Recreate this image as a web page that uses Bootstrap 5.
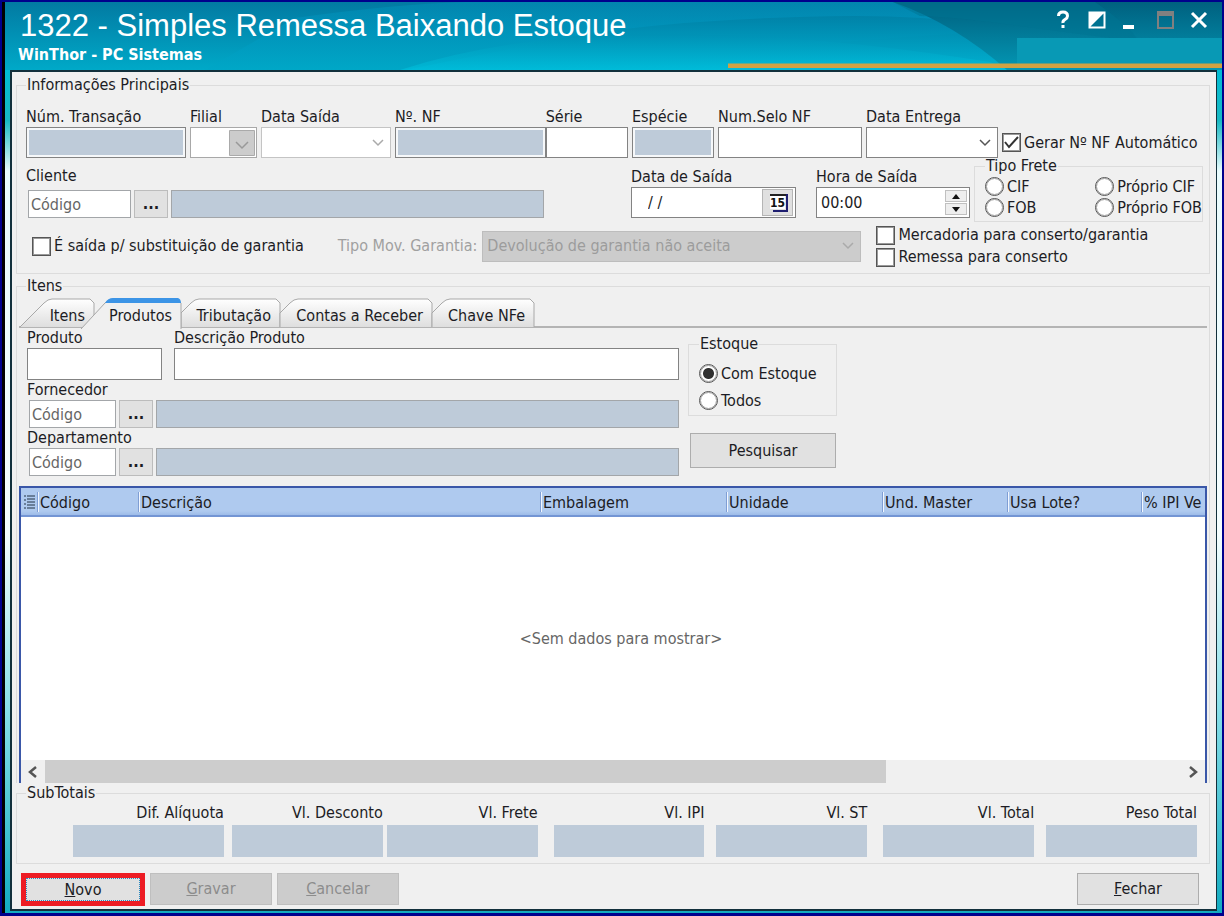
<!DOCTYPE html>
<html lang="pt-BR">
<head>
<meta charset="utf-8">
<meta name="viewport" content="width=device-width, initial-scale=1">
<title>1322 - Simples Remessa Baixando Estoque</title>
<link href="https://cdn.jsdelivr.net/npm/bootstrap@5.3.0/dist/css/bootstrap.min.css" rel="stylesheet">
<style>
:root { --face:#f0f0f0; --blue-gray:#becbd9; --ink:#1c1c24; }
body { font-family:"DejaVu Sans Condensed","Noto Sans",sans-serif; font-size:16px; line-height:20px; color:var(--ink); background:#00008c; }
.window { min-height:100vh; border:2px solid #00008c; border-width:2px 2px 3px; background:#05a9c2; }
.window-frame { border-left:3px solid #000; }
.titlebar { height:68px; color:#fff; }
.titlebar .art { position:absolute; inset:0; width:100%; height:100%; }
.titlebar h1 { font:31px/36px "Liberation Sans",sans-serif; margin:0; padding:6px 0 0 15px; }
.titlebar p { font-weight:700; line-height:20px; padding:1px 0 0 13px; margin:0; }
.win-btns { gap:12px; padding:7px 12px 0 0; }
.win-btn { background:none; border:0; padding:0; width:22px; height:22px; line-height:0; }
.side-glow { padding:0 5px 2px; background:linear-gradient(#00bcd4,#19b9c3 6%,#e8fbfd 12%,#f4fdfe 55%,#8be0ea 75%,#12abc0); }
.client { background:var(--face); border:2px solid #12303c; border-right-width:1px; padding:3px 6px 3px 4px; }
.group { border:1px solid #dcdcdc; }
.group > legend { float:none; width:auto; font-size:16px; line-height:20px; margin:0 0 0 9px; padding:0 1px; }
.group > .flush { margin-left:0; }
.group > legend.tight { line-height:16px; margin-left:0; }
.main-group { padding:12px 6px 5px 9px; }
.main-group > .flush, .stock > .flush { margin-left:0; }
.items-group { border-bottom:0; padding:0 2px; margin-top:12px; }
.group-title { align-self:flex-start; margin:-11px 0 0 7px; padding:0 1px; background:var(--face); line-height:20px; }
.cap { display:block; line-height:20px; white-space:nowrap; }
.box { display:block; width:100%; min-width:0; height:31px; border:1px solid #838383; border-radius:0; background:#fff; color:var(--ink); padding:0 4px; font:inherit; appearance:none; }
.box.locked { background:var(--blue-gray); box-shadow:inset 0 0 0 2px #f6f8fa; }
.box.tall { height:32px; }
.box.short { height:28px; border-color:#a3a6a9; padding:0 2px; }
.box.short::placeholder { color:#666; opacity:1; }
.box.fill { background:var(--blue-gray); }
.box.sum { height:32px; border:0; background:var(--blue-gray); }
select.box { background:#fff url("data:image/svg+xml,%3Csvg xmlns='http://www.w3.org/2000/svg' width='12' height='8'%3E%3Cpath d='M1 1l5 5 5-5' fill='none' stroke='%23555' stroke-width='1.5'/%3E%3C/svg%3E") no-repeat right 6px center; opacity:1; }
select.box.off { border-color:#c4c4c4; background-image:url("data:image/svg+xml,%3Csvg xmlns='http://www.w3.org/2000/svg' width='12' height='8'%3E%3Cpath d='M1 1l5 5 5-5' fill='none' stroke='%23aaa' stroke-width='1.5'/%3E%3C/svg%3E"); }
select.box.framed { border-color:#a8a8a8; background-image:url("data:image/svg+xml,%3Csvg xmlns='http://www.w3.org/2000/svg' width='26' height='26'%3E%3Cpath d='M.5 .5h25v25H.5z' fill='%23ccc' stroke='%23aaa'/%3E%3Cpath d='M7 12l6 6 6-6' fill='none' stroke='%23999' stroke-width='1.5'/%3E%3C/svg%3E"); background-position:right 1px center; }
select.box.gray { background-color:#ccc; border-color:#bdbdbd; color:#9c9c9c; }
.btn-face { border:1px solid #adadad; border-radius:0; background:#e1e1e1; color:var(--ink); font-size:16px; line-height:20px; padding:0; height:32px; }
.btn-face:disabled { background:#ccc; border-color:#bfbfbf; color:#8c8c8c; opacity:1; }
.btn-dots { width:34px; height:28px; flex:none; font-weight:700; border-color:#bcbcbc; }
.btn-action { width:122px; }
.btn-search { width:146px; height:35px; margin-left:2px; }
.btn-hot { width:124px; height:33px; border:5px solid #ed1c24; outline:1px dotted #2b8ac0; outline-offset:-6px; }
.after-hot { margin-left:5px; }
.pick { display:flex; align-items:center; gap:3px; white-space:nowrap; }
.pick input { appearance:none; flex:none; width:19px; height:19px; margin:0; background:#fff; border:1px solid #555; outline:1px solid #9a9a9a; outline-offset:-2px; }
.pick input[type=radio] { border-radius:50%; }
.pick input[type=radio]:checked { background:radial-gradient(circle,#303030 0 5px,#fff 6px); }
.pick input[type=checkbox]:checked { background:#fff url("data:image/svg+xml,%3Csvg xmlns='http://www.w3.org/2000/svg' width='17' height='17'%3E%3Cpath d='M2 8l4 5 9-10' fill='none' stroke='%23333' stroke-width='2'/%3E%3C/svg%3E") center; }
.fields-top { display:grid; gap:4px; grid-template-columns:160fr 67fr 130fr 233fr 82fr 144fr 132fr 201fr; align-items:end; }
.fields-top .nf { flex:150 1 0; min-width:0; }
.fields-top .serie { flex:82 1 0; min-width:0; }
.auto-nf { height:31px; }
.fields-mid { display:grid; grid-template-columns:518fr 87fr 165fr 20fr 154fr 4fr 229fr; align-items:end; }
.spin { position:absolute; right:3px; top:3px; width:22px; height:25px; display:flex; flex-direction:column; gap:1px; }
.spin button { flex:1; min-height:0; padding:0; border:1px solid #c0c0c0; background:#eee; line-height:0; }
.cal { position:absolute; right:3px; top:2px; width:31px; height:27px; padding:0; border:1px solid #b5b5b5; background:#e0e0e0; line-height:0; }
.freight { padding:2px 0 3px 10px; }
.freight .pick { height:21px; }
.warranty { padding:2px 0 0 6px; }
.mov { color:#a0a0a0; margin-left:34px; white-space:nowrap; }
.warranty .gray { flex:373 1 0; margin-left:5px; }
.repair { flex:330 1 0; margin-left:15px; }
.repair .pick { height:22px; }
.tabs { display:flex; border-bottom:2px solid #b4b4b4; height:30px; padding-left:1px; margin-top:2px; }
.tabs button { position:relative; border:0; background:none; padding:7px 9px 0 0; height:29px; text-align:right; white-space:nowrap; color:var(--ink); line-height:20px; }
.tabs svg { position:absolute; left:0; top:0; z-index:0; overflow:visible; }
.tabs span { position:relative; z-index:1; }
.tabs .front { z-index:2; margin-left:-13px; }
.filters { padding:0 8px; }
.filter-form { flex:0 1 652px; }
.prod { width:135px; margin-right:12px; }
.lookup { display:flex; gap:3px; padding-left:2px; }
.lookup .box:first-child { width:87px; flex:none; }
.lookup.client-code .box:first-child { width:103px; }
.side { padding-left:9px; }
.stock { width:149px; margin:6px 0 17px; padding:6px 0 1px 10px; }
.stock .pick { height:27px; }
.grid-view { margin-top:10px; border:2px solid #3a57a8; border-bottom:0; background:#fff; overflow:hidden; }
.grid-view table { table-layout:fixed; width:100%; margin:0; border-collapse:collapse; }
.grid-view th { height:28px; padding:2px 0 0 3px; font-weight:400; color:var(--ink); background:linear-gradient(#afcaef 85%,#9dbce9); border-bottom:2px solid #7395d4; white-space:nowrap; }
.grid-view th + th { background:linear-gradient(#7f9ed4,#7f9ed4) 0 4px/1px 20px no-repeat,linear-gradient(#f2f7ff,#f2f7ff) 1px 4px/1px 20px no-repeat,linear-gradient(#afcaef 85%,#9dbce9); }
.empty { color:#666; }
.scroller { height:23px; background:#f0f0f0; }
.scroller .thumb { background:#cdcdcd; width:74%; }
.scroller button { width:24px; border:0; background:none; padding:0; line-height:0; }
.totals { padding:0 12px 6px 56px; }
.totals label { text-align:right; padding-bottom:2px; box-sizing:content-box; }
.totals > div { flex:1 1 0; min-width:0; }
.totals .gap-12 { margin-left:12px; }
.footer-bar { padding:9px 11px 0 5px; }
</style>
</head>
<body>
<div class="window d-flex flex-column">
<div class="window-frame d-flex flex-column flex-grow-1">
  <header class="titlebar position-relative d-flex justify-content-between">
    <svg class="art" viewBox="0 0 1217 68" preserveAspectRatio="none" aria-hidden="true">
      <defs>
        <linearGradient id="sea" x1="0" y1="0" x2="0" y2="1"><stop offset="0" stop-color="#027aa2"/><stop offset="1" stop-color="#00a9c8"/></linearGradient>
        <linearGradient id="top" x1="0" y1="0" x2="0" y2="1"><stop offset="0" stop-color="#028cb6"/><stop offset=".45" stop-color="#0098c0"/><stop offset="1" stop-color="#00a6c6"/></linearGradient>
        <linearGradient id="mid" x1="0" y1="0" x2="0" y2="1"><stop offset="0" stop-color="#007fa4"/><stop offset="1" stop-color="#00b4d4"/></linearGradient>
        <linearGradient id="wave" x1="0" y1="0" x2="0" y2="1"><stop offset="0" stop-color="#0090b4"/><stop offset="1" stop-color="#00c2de"/></linearGradient>
        <linearGradient id="deep" x1="0" y1="0" x2="0" y2="1"><stop offset="0" stop-color="#00607f"/><stop offset="1" stop-color="#0397b4"/></linearGradient>
      </defs>
      <path d="M0 0H1217V68H0z" fill="url(#sea)"/>
      <path d="M290 16Q390 2 460 0H920L980 30Q800 40 560 68H200z" fill="url(#top)" opacity=".6"/>
      <path d="M500 48Q630 16 850 14Q920 14 975 22L1003 68H400z" fill="url(#mid)" opacity=".75"/>
      <path d="M395 68Q500 34 640 32Q800 30 985 60L1003 68z" fill="url(#wave)" opacity=".6"/>
      <path d="M888 0Q950 22 1002 68H1217V0z" fill="url(#deep)"/>
      <path d="M888 0H1090Q1120 20 1135 40L1000 22Q950 15 915 14z" fill="#007391" opacity=".5"/>
      <path d="M1012 36H1217V62H1012z" fill="#0899b5"/>
      <path d="M723 61.500H1217V66H723z" fill="#d0a243"/>
    </svg>
    <div class="position-relative">
      <h1>1322 - Simples Remessa Baixando Estoque</h1>
      <p>WinThor - PC Sistemas</p>
    </div>
    <div class="win-btns position-relative d-flex">
      <button class="win-btn" aria-label="Ajuda"><svg width="18" height="20" viewBox="0 0 18 20"><path d="M4.500 6Q4.500 2 9 2T13.500 6Q13.500 8 11 9.500T9 13M9 15v3" fill="none" stroke="#fff" stroke-width="3"/></svg></button>
      <button class="win-btn" aria-label="Recolher"><svg width="18" height="18"><path d="M1.500 1.500h15v15h-15z" fill="none" stroke="#fff" stroke-width="2"/><path d="M1 1H17L1 17z" fill="#fff"/></svg></button>
      <button class="win-btn" aria-label="Minimizar"><svg width="18" height="20"><path d="M1 15h11v4H1z" fill="#fff"/></svg></button>
      <button class="win-btn" aria-label="Maximizar" disabled><svg width="17" height="18"><path d="M1 1h15v16H1z" fill="none" stroke="#808080" stroke-width="2"/><path d="M0 0h17v5H0z" fill="#808080"/></svg></button>
      <button class="win-btn" aria-label="Fechar janela"><svg width="18" height="20"><path d="M2 3L16 17M16 3L2 17" stroke="#fff" stroke-width="3"/></svg></button>
    </div>
  </header>

  <div class="side-glow d-flex flex-column flex-grow-1">
  <main class="client d-flex flex-column flex-grow-1">
    <fieldset class="group main-group">
      <legend class="flush">Informações Principais</legend>
      <div class="fields-top">
        <div><label class="cap" for="trans">Núm. Transação</label><input id="trans" class="box locked" readonly></div>
        <div><label class="cap" for="filial">Filial</label><select id="filial" class="box framed" disabled></select></div>
        <div><label class="cap" for="dsaida">Data Saída</label><select id="dsaida" class="box off" disabled></select></div>
        <div class="d-flex">
          <div class="nf"><label class="cap" for="nf">Nº. NF</label><input id="nf" class="box locked" readonly></div>
          <div class="serie"><label class="cap" for="serie">Série</label><input id="serie" class="box"></div>
        </div>
        <div><label class="cap" for="especie">Espécie</label><input id="especie" class="box locked" readonly></div>
        <div><label class="cap" for="selo">Num.Selo NF</label><input id="selo" class="box"></div>
        <div><label class="cap" for="entrega">Data Entrega</label><select id="entrega" class="box"></select></div>
        <label class="pick auto-nf"><input type="checkbox" checked>Gerar Nº NF Automático</label>
      </div>

      <div class="fields-mid">
        <div class="pb-1">
          <label class="cap mb-1" for="cliente">Cliente</label>
          <div class="lookup client-code">
            <input id="cliente" class="box short" placeholder="Código">
            <button class="btn btn-face btn-dots" aria-label="Buscar cliente">...</button>
            <input class="box short fill" readonly aria-label="Nome do cliente">
          </div>
        </div>
        <div></div>
        <div class="pb-1"><label class="cap" for="datas">Data de Saída</label>
          <div class="position-relative"><input id="datas" class="box ps-3" value="/ /">
            <button class="cal" aria-label="Calendário"><svg width="22" height="20"><path d="M4 2h16v16H6" fill="none" stroke="#1e1e70" stroke-width="2"/><path d="M3 3h15v13H3z" fill="#fff"/><path d="M3 2h16" stroke="#222" stroke-width="2"/><text x="3" y="14" font-size="12" font-weight="700" fill="#111">15</text></svg></button></div></div>
        <div></div>
        <div class="pb-1"><label class="cap" for="hora">Hora de Saída</label>
          <div class="position-relative"><input id="hora" class="box" value="00:00">
            <div class="spin"><button aria-label="Aumentar"><svg width="10" height="5"><path d="M1 5l4-5 4 5z" fill="#111"/></svg></button><button aria-label="Diminuir"><svg width="10" height="5"><path d="M1 0l4 5 4-5z" fill="#111"/></svg></button></div></div></div>
        <div></div>
        <fieldset class="group freight">
          <legend class="tight">Tipo Frete</legend>
          <div class="d-flex justify-content-between">
            <div><label class="pick"><input type="radio" name="frete">CIF</label><label class="pick"><input type="radio" name="frete">FOB</label></div>
            <div><label class="pick"><input type="radio" name="frete">Próprio CIF</label><label class="pick"><input type="radio" name="frete">Próprio FOB</label></div>
          </div>
        </fieldset>
      </div>

      <div class="warranty d-flex align-items-center">
        <label class="pick"><input type="checkbox">É saída p/ substituição de garantia</label>
        <label class="mov" for="mov">Tipo Mov. Garantia:</label>
        <select id="mov" class="box off gray" disabled><option>Devolução de garantia não aceita</option></select>
        <div class="repair">
          <label class="pick"><input type="checkbox">Mercadoria para conserto/garantia</label>
          <label class="pick"><input type="checkbox">Remessa para conserto</label>
        </div>
      </div>
    </fieldset>

    <section class="group items-group d-flex flex-column flex-grow-1" aria-labelledby="itemsTitle">
      <div class="group-title" id="itemsTitle">Itens</div>
      <nav class="tabs" role="tablist">
        <button role="tab" style="width:74px"><svg width="74" height="29"><defs><linearGradient id="tabFace" x1="0" y1="0" x2="0" y2="1"><stop offset="0" stop-color="#fff"/><stop offset="1" stop-color="#dedede"/></linearGradient></defs><path d="M0 29L24 5Q28 1 32 1H70L74 5V29" fill="url(#tabFace)" stroke="#a8a8a8"/></svg><span>Itens</span></button>
        <button class="front" role="tab" aria-selected="true" style="width:100px"><svg width="100" height="30"><path d="M0 31L24 5Q28 1 32 1H96L100 5V31" fill="#f0f0f0" stroke="#a8a8a8"/><path d="M24 5Q27 0 32 0H97Q100 1 100 5z" fill="#3c94e6"/></svg><span>Produtos</span></button>
        <button role="tab" style="width:99px"><svg width="99" height="29"><path d="M0 29V15L10 5Q14 1 18 1H95L99 5V29" fill="url(#tabFace)" stroke="#a8a8a8"/></svg><span>Tributação</span></button>
        <button role="tab" style="width:152px"><svg width="152" height="29"><path d="M0 29V15L10 5Q14 1 18 1H148L152 5V29" fill="url(#tabFace)" stroke="#a8a8a8"/></svg><span>Contas a Receber</span></button>
        <button role="tab" style="width:102px"><svg width="102" height="29"><path d="M0 29V15L10 5Q14 1 18 1H98L102 5V29" fill="url(#tabFace)" stroke="#a8a8a8"/></svg><span>Chave NFe</span></button>
      </nav>

      <div class="filters d-flex">
        <div class="filter-form">
          <div class="d-flex">
            <div class="prod"><label class="cap" for="produto">Produto</label><input id="produto" class="box tall"></div>
            <div class="flex-grow-1"><label class="cap" for="descr">Descrição Produto</label><input id="descr" class="box tall"></div>
          </div>
          <label class="cap" for="forn">Fornecedor</label>
          <div class="lookup"><input id="forn" class="box short" placeholder="Código"><button class="btn btn-face btn-dots" aria-label="Buscar fornecedor">...</button><input class="box short fill" readonly aria-label="Nome do fornecedor"></div>
          <label class="cap" for="depto">Departamento</label>
          <div class="lookup"><input id="depto" class="box short" placeholder="Código"><button class="btn btn-face btn-dots" aria-label="Buscar departamento">...</button><input class="box short fill" readonly aria-label="Nome do departamento"></div>
        </div>
        <div class="side">
          <fieldset class="group stock">
            <legend class="flush">Estoque</legend>
            <label class="pick"><input type="radio" name="estoque" checked>Com Estoque</label>
            <label class="pick"><input type="radio" name="estoque">Todos</label>
          </fieldset>
          <button class="btn btn-face btn-search">Pesquisar</button>
        </div>
      </div>

      <div class="grid-view d-flex flex-column flex-grow-1">
        <table>
          <colgroup><col style="width:16px"><col style="width:101px"><col style="width:402px"><col style="width:186px"><col style="width:156px"><col style="width:125px"><col style="width:134px"><col></colgroup>
          <thead><tr><th aria-label="Colunas"><svg class="d-block" width="11" height="15"><path d="M0 1h2M0 5h2M0 9h2M0 13h2M3 1h8M3 4h8M3 7h8M3 10h8M3 13h8" stroke="#234"/></svg></th><th>Código</th><th>Descrição</th><th>Embalagem</th><th>Unidade</th><th>Und. Master</th><th>Usa Lote?</th><th>% IPI Ve</th></tr></thead>
        </table>
        <div class="empty flex-grow-1 d-flex align-items-center justify-content-center ps-3">&lt;Sem dados para mostrar&gt;</div>
        <div class="scroller d-flex">
          <button aria-label="Rolar à esquerda"><svg width="12" height="12"><path d="M9 1L3 6l6 5" fill="none" stroke="#555" stroke-width="2.500"/></svg></button>
          <div class="flex-grow-1 d-flex"><div class="thumb"></div></div>
          <button aria-label="Rolar à direita"><svg width="12" height="12"><path d="M3 1l6 5-6 5" fill="none" stroke="#555" stroke-width="2.500"/></svg></button>
        </div>
      </div>
    </section>

    <fieldset class="group">
      <legend>SubTotais</legend>
      <div class="totals d-flex">
        <div><label class="cap" for="t1">Dif. Alíquota</label><input id="t1" class="box sum" readonly></div>
        <div class="ms-2"><label class="cap" for="t2">Vl. Desconto</label><input id="t2" class="box sum" readonly></div>
        <div class="ms-1"><label class="cap" for="t3">Vl. Frete</label><input id="t3" class="box sum" readonly></div>
        <div class="ms-3"><label class="cap" for="t4">Vl. IPI</label><input id="t4" class="box sum" readonly></div>
        <div class="gap-12"><label class="cap" for="t5">Vl. ST</label><input id="t5" class="box sum" readonly></div>
        <div class="ms-3"><label class="cap" for="t6">Vl. Total</label><input id="t6" class="box sum" readonly></div>
        <div class="gap-12"><label class="cap" for="t7">Peso Total</label><input id="t7" class="box sum" readonly></div>
      </div>
    </fieldset>

    <div class="footer-bar d-flex">
      <button class="btn btn-face btn-hot"><u>N</u>ovo</button>
      <button class="btn btn-face btn-action after-hot" disabled><u>G</u>ravar</button>
      <button class="btn btn-face btn-action after-hot me-auto" disabled><u>C</u>ancelar</button>
      <button class="btn btn-face btn-action"><u>F</u>echar</button>
    </div>
  </main>
  </div>
</div>
</div>
<script src="https://cdn.jsdelivr.net/npm/bootstrap@5.3.0/dist/js/bootstrap.bundle.min.js"></script>
</body>
</html>
